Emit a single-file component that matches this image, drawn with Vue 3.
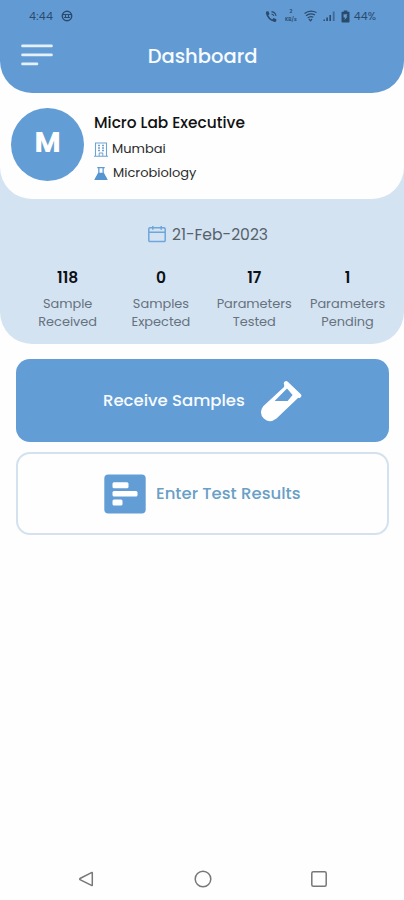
<script setup>
const stats = [
  { value: '118', label: ['Sample', 'Received'] },
  { value: '0', label: ['Samples', 'Expected'] },
  { value: '17', label: ['Parameters', 'Tested'] },
  { value: '1', label: ['Parameters', 'Pending'] },
]
</script>

<template>
  <div class="screen">
    <section class="summary">
      <div class="profile-card">
        <header class="header">
          <div class="status">
            <span class="time">4:44</span>
            <svg class="globe" width="12" height="12" viewBox="0 0 12 12" fill="none" stroke="currentColor">
              <circle cx="6" cy="6" r="4.7" stroke-width="1.5" />
              <path d="M2 4.5h8M3 7.5h6M4.5 4.5v3M7.5 4.5v3" stroke-width="1.1" />
            </svg>
            <span class="spacer"></span>
            <svg class="call" width="13" height="13" viewBox="0 0 13 13">
              <path d="M1.2 1.5 3.4 1.2 4.5 4 3.3 5.3Q4.5 8 7.2 9.4L8.6 8.1 11.4 9.3 11.1 11.5Q10.5 12.2 9 11.8 2.2 9.6.9 3.3Z" fill="currentColor" />
              <path d="M6.5 1.6Q10.5 2 11 6M6.5 4Q8.5 4.2 8.8 6" fill="none" stroke="currentColor" stroke-width="1.1" />
            </svg>
            <span class="speed"><span>2</span><span>KB/s</span></span>
            <svg class="wifi" width="13" height="12" viewBox="0 0 13 12" fill="none" stroke="currentColor" stroke-width="1.2">
              <path d="M.5 3.5Q6-.8 12.5 2.5M2 5.8Q6.3 2.4 11 5M3.7 8Q6.5 5.7 9.3 7.3" />
              <path d="m5 9 1.5 1.8L8 9" />
            </svg>
            <svg class="signal" width="13" height="12" viewBox="0 0 13 12" fill="currentColor">
              <path d="M.5 9.5h1.4V11H.5zM3.3 7.5h1.6V11H3.3zM6.4 5h1.6v6H6.4z" />
              <path d="M9.8 1.5h1.8V11H9.8z" opacity=".6" />
            </svg>
            <svg class="battery" width="9" height="13" viewBox="0 0 9 13">
              <path d="M2.7.5h3.6v1.3H8q.5 0 .5.6v9.2q0 .9-.8.9H1.3q-.8 0-.8-.9V2.4q0-.6.5-.6h1.7z" fill="currentColor" />
              <path d="M2.5 4.2h4L5.3 6.5h1.2L3.5 10l.5-2.6H2.6z" fill="#629cd5" />
            </svg>
            <span class="percent">44%</span>
          </div>
          <div class="bar">
            <svg class="menu" width="32" height="22" viewBox="0 0 32 22" fill="none" stroke="#e4f0fa" stroke-width="2.6" stroke-linecap="round">
              <path d="M1.5 1.9h29M1.5 10.9h29M1.5 19.9h14.5" />
            </svg>
            <h1>Dashboard</h1>
          </div>
        </header>
        <div class="profile">
          <div class="avatar"><span>M</span></div>
          <div class="who">
            <h2>Micro Lab Executive</h2>
            <p class="line city">
              <svg width="14" height="15" viewBox="0 0 14 15" fill="none" stroke="#6fa3d0">
                <path d="M1.5 14V1h11v13M0 14.3h14" stroke-width="1.1" />
                <path d="M4 3.5h2M8 3.5h2M4 6h2M8 6h2M4 8.5h2M8 8.5h2" stroke-width="1.4" />
                <path d="M5.2 14v-3h3.6v3" />
              </svg>
              <span>Mumbai</span>
            </p>
            <p class="line dept">
              <svg width="14" height="15" viewBox="0 0 15 15">
                <path d="M3.5 1.2h8M5.2 1v6L1.6 13.5h11.8L9.8 7V1" fill="none" stroke="#5f9bd3" stroke-width="1.4" />
                <path d="M4.6 6.8h5.8l4.2 7.6H.4z" fill="#5595d2" />
              </svg>
              <span>Microbiology</span>
            </p>
          </div>
        </div>
      </div>
      <div class="date">
        <svg width="18" height="17" viewBox="0 0 18 17" fill="none" stroke="#6ea6dc" stroke-width="1.5">
          <rect x=".8" y="1.8" width="16.4" height="13.8" rx="1.2" />
          <path d="M1 6.3h16M4.8 0v3.7M13.2 0v3.7" />
        </svg>
        <span>21-Feb-2023</span>
      </div>
      <div class="stats">
        <div v-for="(s, i) in stats" :key="i" class="stat">
          <strong>{{ s.value }}</strong>
          <span v-for="word in s.label" :key="word">{{ word }}</span>
        </div>
      </div>
    </section>
    <main class="actions">
      <button class="action primary">
        <span>Receive Samples</span>
        <svg width="42" height="42" viewBox="0 0 42 42">
          <path d="M26.2 3.4 39 15.6" stroke="#fff" stroke-width="4.6" stroke-linecap="round" />
          <path fill-rule="evenodd" d="M24.5 3.5 39 17 16.5 38.5Q9.5 43.8 3.8 38.6-1.6 32.6 3.2 26.2L24 7ZM27 8.4 14.6 21H27.6L32.6 15Z" fill="#fff" />
        </svg>
      </button>
      <button class="action outline">
        <svg width="42" height="40" viewBox="0 0 42 40">
          <rect x=".3" y=".5" width="41.4" height="39" rx="4" fill="#629dd6" />
          <g fill="#fff">
            <rect x="8.5" y="8.3" width="16" height="6" rx="1.5" />
            <rect x="8.5" y="17" width="25" height="5.6" rx="1.5" />
            <rect x="8.5" y="25.5" width="10" height="6" rx="1.5" />
          </g>
        </svg>
        <span>Enter Test Results</span>
      </button>
    </main>
    <nav class="system-nav">
      <svg width="18" height="18" viewBox="0 0 18 18"><path d="M15.3 3v12q0 .8-.8.4L3 9.6q-.7-.6 0-1.1l11.5-5.9q.8-.4.8.4Z" /></svg>
      <svg width="18" height="18" viewBox="0 0 18 18"><circle cx="9" cy="9" r="7.8" /></svg>
      <svg width="18" height="18" viewBox="0 0 18 18"><rect x="1.8" y="1.8" width="14.4" height="14.4" rx="1.5" /></svg>
    </nav>
  </div>
</template>

<style>
body {
  background: #fefefe;
}
</style>

<style scoped>
.screen {
  display: flex;
  flex-direction: column;
  height: 900px;
  overflow: hidden;
  background: #fefefe;
  font-family: Poppins, Inter, "Liberation Sans", sans-serif;
  color: #111;
}
h1, h2, p {
  margin: 0;
}
svg {
  display: block;
  flex: none;
}
span, strong, h1, h2 {
  white-space: nowrap;
}
.summary {
  height: 344px;
  background: #d4e3f1;
  border-radius: 0 0 32px 32px;
}
.profile-card {
  height: 199px;
  background: #fefefe;
  border-radius: 0 0 32px 32px;
}
.header {
  height: 93px;
  background: #629bd4;
  border-radius: 0 0 32px 32px;
}
.status {
  display: flex;
  align-items: center;
  height: 32px;
  padding: 0 28px 0 29px;
  color: #2a4a6c;
  font-size: 11px;
}
.time {
  letter-spacing: .3px;
}
.globe {
  margin-left: 8px;
}
.spacer {
  flex: 1;
}
.speed {
  display: flex;
  flex-direction: column;
  align-items: center;
  width: 16px;
  margin-left: 5px;
  font-size: 5px;
  font-weight: 600;
  line-height: 8px;
}
.wifi {
  margin-left: 5px;
}
.signal {
  margin-left: 6px;
}
.battery {
  margin: 0 4px 0 5px;
}
.bar {
  display: grid;
  grid-template-columns: 32px 1fr 32px;
  align-items: center;
  height: 48px;
  padding: 0 20px 0 21px;
}
.menu {
  margin-top: -2px;
}
h1 {
  color: #f7fbff;
  font-size: 19.5px;
  font-weight: 500;
  text-align: center;
}
.profile {
  display: flex;
  gap: 10px;
  padding: 15px 11px 0;
}
.avatar {
  display: grid;
  place-items: center;
  width: 73px;
  height: 73px;
  border-radius: 50%;
  background: #629dd6;
  color: #fff;
  font-size: 28.5px;
  font-weight: 700;
}
.avatar span {
  margin-top: -5px;
}
.who {
  padding-top: 3px;
}
h2 {
  height: 23px;
  font-size: 15.4px;
  font-weight: 500;
  line-height: 23px;
}
.line {
  display: flex;
  align-items: center;
  gap: 5px;
  height: 24px;
  color: #2b2b2b;
  font-size: 13px;
}
.city {
  gap: 4px;
  padding-top: 3px;
}
.date {
  display: flex;
  align-items: center;
  justify-content: center;
  gap: 6px;
  height: 20px;
  padding: 25px 0 0 12px;
  color: #56616c;
  font-size: 15.6px;
}
.stats {
  display: grid;
  grid-template-columns: repeat(4, 93.3px);
  padding: 23px 0 0 21px;
}
.stat {
  display: flex;
  flex-direction: column;
  align-items: center;
  color: #65727f;
  font-size: 12.9px;
  line-height: 18px;
}
.stat strong {
  margin-bottom: 6px;
  color: #0c1016;
  font-size: 15.5px;
  font-weight: 600;
  line-height: 22px;
}
.actions {
  display: grid;
  gap: 10px;
  padding: 15px 15px 0 16px;
}
.action {
  display: flex;
  align-items: center;
  box-sizing: border-box;
  height: 83px;
  padding: 0;
  border: 0;
  border-radius: 14px;
  font: 500 16.5px Poppins, Inter, "Liberation Sans", sans-serif;
}
.primary {
  gap: 15px;
  padding-left: 87px;
  background: #629dd6;
  color: #f7fbff;
}
.outline {
  gap: 10px;
  padding-left: 86px;
  border: 2px solid #d3e2ee;
  background: #fefefe;
  color: #6a9fc6;
}
.system-nav {
  display: flex;
  justify-content: space-between;
  margin-top: auto;
  padding: 0 76px 12px 77px;
}
.system-nav svg {
  fill: none;
  stroke: #777;
  stroke-width: 1.5;
}
</style>
